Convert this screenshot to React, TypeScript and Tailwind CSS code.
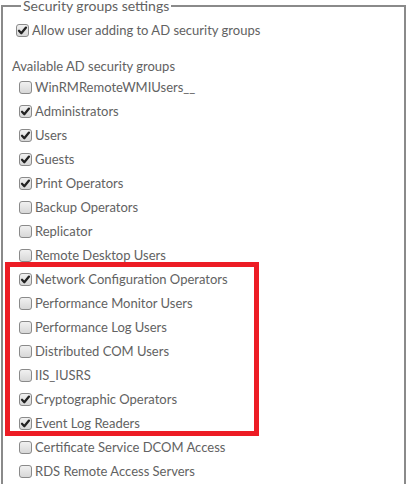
const groups = [
  { name: "WinRMRemoteWMIUsers__", checked: false },
  { name: "Administrators", checked: true },
  { name: "Users", checked: true },
  { name: "Guests", checked: true },
  { name: "Print Operators", checked: true },
  { name: "Backup Operators", checked: false },
  { name: "Replicator", checked: false },
  { name: "Remote Desktop Users", checked: false },
];

const highlighted = [
  { name: "Network Configuration Operators", checked: true },
  { name: "Performance Monitor Users", checked: false },
  { name: "Performance Log Users", checked: false },
  { name: "Distributed COM Users", checked: false },
  { name: "IIS_IUSRS", checked: false },
  { name: "Cryptographic Operators", checked: true },
  { name: "Event Log Readers", checked: true },
];

const rest = [
  { name: "Certificate Service DCOM Access", checked: false },
  { name: "RDS Remote Access Servers", checked: false },
];

function Checkbox({ checked }: { checked: boolean }) {
  return (
    <svg width="13" height="13" viewBox="0 0 13 13" className="shrink-0">
      <defs>
        <linearGradient id="cbg" x1="0" y1="0" x2="0" y2="1">
          <stop offset="0" stopColor="#f2f2f2" />
          <stop offset="1" stopColor="#d6d6d6" />
        </linearGradient>
      </defs>
      <rect x="0.5" y="0.5" width="12" height="12" rx="2.5" fill="url(#cbg)" stroke="#8a8a8a" />
      {checked && (
        <path d="M3 6.8 L5.3 9.2 L10 3.6" fill="none" stroke="#222" strokeWidth="2.3" strokeLinecap="round" strokeLinejoin="round" />
      )}
    </svg>
  );
}

function Row({ name, checked }: { name: string; checked: boolean }) {
  return (
    <label className="flex items-center gap-[3px] h-[24px] pl-[7px]">
      <Checkbox checked={checked} />
      <span className="whitespace-nowrap">{name}</span>
    </label>
  );
}

export default function App() {
  return (
    <div className="w-[406px] h-[484px] overflow-hidden bg-white text-[#626262] text-[13px] leading-[24px] font-['Lato','Open_Sans',sans-serif]">
      <fieldset className="ml-[1px] border-2 border-[#8a8a8a] pl-[9px] pt-[6px] pb-4 m-0 min-w-0">
        <legend className="ml-[9px] px-[2px] leading-[12px] text-[14px]">Security groups settings</legend>

        <label className="flex items-center gap-[3px] h-[24px] pl-[4px]">
          <Checkbox checked />
          <span>Allow user adding to AD security groups</span>
        </label>

        <div className="mt-[15px] leading-[18px]">Available AD security groups</div>

        <div className="flex flex-col">
          {groups.map((g) => (
            <Row key={g.name} {...g} />
          ))}

          {/* highlighted block */}
          <div className="relative flex flex-col">
            {highlighted.map((g) => (
              <Row key={g.name} {...g} />
            ))}
            <div className="absolute -top-[5px] -bottom-[1px] -left-[7px] w-[254px] border-[5px] border-[#ed1c24] pointer-events-none"></div>
          </div>

          {rest.map((g) => (
            <Row key={g.name} {...g} />
          ))}
        </div>
      </fieldset>
    </div>
  );
}
